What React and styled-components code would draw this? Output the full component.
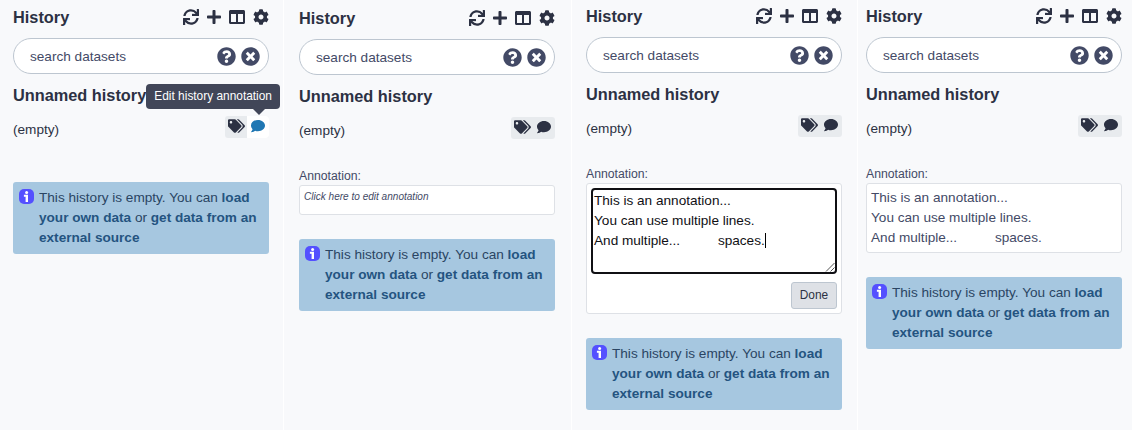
import React from "react";
import styled, { createGlobalStyle } from "styled-components";
import {
  FaSync,
  FaPlus,
  FaColumns,
  FaCog,
  FaQuestionCircle,
  FaTimesCircle,
  FaTags,
  FaComment,
} from "react-icons/fa";

const GlobalStyle = createGlobalStyle`
  *, *::before, *::after { box-sizing: border-box; }
  body {
    margin: 0;
    background: #f8f9fb;
    color: #2c3143;
    font-family: "Liberation Sans", Arial, sans-serif;
    font-size: 13.6px;
    line-height: 20px;
    overflow: hidden;
  }
`;

const Page = styled.main`
  display: grid;
  grid-template-columns: 284px 288px 286px 274px;
  height: 430px;
`;

const Panel = styled.section`
  display: flex;
  flex-direction: column;
  padding-top: ${(p) => p.$top}px;
  padding-left: ${(p) => p.$left}px;
  border-right: ${(p) => (p.$last ? "0" : "1px solid #fff")};
  > * { width: 256px; flex: none; }
`;

const Header = styled.header`
  display: flex;
  justify-content: space-between;
  align-items: center;
  height: 20px;
`;

const Title = styled.h1`
  margin: 0;
  font-size: 16.32px;
  line-height: 20px;
  font-weight: bold;
`;

const Toolbar = styled.nav`
  display: flex;
  gap: 8px;
  svg { display: block; width: 16px; height: 16px; }
  svg:nth-child(2) { width: 14px; }
`;

const SearchBox = styled.div`
  display: flex;
  align-items: center;
  height: 36px;
  margin-top: 11px;
  padding: 0 8px 0 16px;
  border: 1px solid #bdc6d0;
  border-radius: 18px;
  background: #fff;
  color: #434a66;
  svg { display: block; width: 19px; height: 19px; margin-left: 5px; }
`;

const SearchText = styled.span`
  flex: 1;
  padding-top: 1px;
`;

const HistoryName = styled.h2`
  margin: 11px 0 0;
  font-size: 16.32px;
  line-height: 20px;
  font-weight: bold;
`;

const SizeRow = styled.div`
  position: relative;
  display: flex;
  justify-content: space-between;
  height: 22px;
  margin-top: 11px;
`;

const SizeText = styled.span`
  padding-top: 4px;
`;

const ButtonGroup = styled.div`
  display: flex;
  border-radius: 3px;
  overflow: hidden;
  background: #e8ebee;
`;

const IconButton = styled.span`
  display: flex;
  justify-content: center;
  width: 22px;
  height: 22px;
  padding-top: 3px;
  background: ${(p) => (p.$active ? "#fff" : "transparent")};
  color: ${(p) => (p.$active ? "#2077b3" : "inherit")};
  svg { display: block; width: ${(p) => p.$size}px; height: 14px; flex: none; }
`;

const Tooltip = styled.div`
  position: absolute;
  right: -11px;
  bottom: 29px;
  padding: 2px 8px 3px;
  border-radius: 4px;
  background: #414658;
  color: #fff;
  font-size: 11.9px;
  white-space: nowrap;
  &::after {
    content: "";
    position: absolute;
    top: 100%;
    right: 15px;
    border: 6.5px solid transparent;
    border-top: 6px solid #414658;
    border-bottom: 0;
  }
`;

const Label = styled.div`
  margin-top: 28px;
  height: 18px;
  line-height: 18px;
  font-size: 12.24px;
  color: #434a66;
`;

const AnnotationBox = styled.div`
  height: ${(p) => p.$height}px;
  padding: 4px;
  border: 1px solid #dee1e6;
  border-radius: 3px;
  background: #fff;
  color: #434a66;
  white-space: pre;
`;

const Placeholder = styled.em`
  display: block;
  font-size: 10.05px;
  line-height: 13px;
`;

const Editor = styled.div`
  position: relative;
  height: 86px;
  padding: 1px;
  border: 2px solid #101014;
  border-radius: 4px;
  color: #101014;
`;

const Caret = styled.span`
  display: inline-block;
  width: 1px;
  height: 15px;
  background: #000;
  vertical-align: -3px;
`;

const ResizeGrip = styled.svg`
  position: absolute;
  right: 0;
  bottom: 0;
`;

const DoneButton = styled.button`
  display: block;
  width: 46px;
  height: 27px;
  margin: 8px 0 0 auto;
  padding: 0 0 2px;
  border: 1px solid #bdc6d0;
  border-radius: 3px;
  background: #dee1e6;
  color: #2c3143;
  font: 11.9px "Liberation Sans", Arial, sans-serif;
`;

const Alert = styled.div`
  display: flex;
  height: 72px;
  margin-top: ${(p) => p.$gap}px;
  padding: 6px;
  border-radius: 3px;
  background: #a6c7e0;
  color: #2a4563;
  p { margin: 0; white-space: nowrap; }
  b { color: #245480; }
`;

const InfoIcon = styled.svg`
  flex: none;
  width: 15px;
  height: 15px;
  margin: 1px 5px 0 0;
`;

const NOTE = "This is an annotation...\nYou can use multiple lines.\nAnd multiple...          spaces.";

function EmptyAlert({ gap }) {
  return (
    <Alert $gap={gap}>
      <InfoIcon viewBox="0 0 15 15">
        <rect width="15" height="15" rx="5" fill="#5450ff" />
        <circle cx="7.6" cy="3.5" r="1.5" fill="#fff" />
        <path d="M4.9 5.7h4.1v7.2H6.6V7.7H4.9z" fill="#fff" />
      </InfoIcon>
      <p>
        This history is empty. You can <b>load</b>
        <br />
        <b>your own data</b> or <b>get data from an</b>
        <br />
        <b>external source</b>
      </p>
    </Alert>
  );
}

function HistoryPanel({ top, left, last, tooltip, gap = 24, children }) {
  return (
    <Panel $top={top} $left={left} $last={last}>
      <Header>
        <Title>History</Title>
        <Toolbar>
          <FaSync />
          <FaPlus />
          <FaColumns />
          <FaCog />
        </Toolbar>
      </Header>
      <SearchBox>
        <SearchText>search datasets</SearchText>
        <FaQuestionCircle />
        <FaTimesCircle />
      </SearchBox>
      <HistoryName>Unnamed history</HistoryName>
      <SizeRow>
        <SizeText>(empty)</SizeText>
        <ButtonGroup>
          <IconButton $size={17}><FaTags /></IconButton>
          <IconButton $size={14} $active={tooltip}><FaComment /></IconButton>
        </ButtonGroup>
        {tooltip && <Tooltip>Edit history annotation</Tooltip>}
      </SizeRow>
      {children}
      <EmptyAlert gap={gap} />
    </Panel>
  );
}

export default function App() {
  return (
    <>
      <GlobalStyle />
      <Page>
        <HistoryPanel top={7} left={13} tooltip gap={44} />
        <HistoryPanel top={8} left={15}>
          <Label>Annotation:</Label>
          <AnnotationBox $height={30}>
            <Placeholder>Click here to edit annotation</Placeholder>
          </AnnotationBox>
        </HistoryPanel>
        <HistoryPanel top={6} left={14}>
          <Label>Annotation:</Label>
          <AnnotationBox $height={131}>
            <Editor>
              {NOTE}
              <Caret />
              <ResizeGrip width="10" height="10" viewBox="0 0 10 10" stroke="#555" strokeWidth="1">
                <path d="M1 9.5 9.5 1M5.5 9.5l4-4" />
              </ResizeGrip>
            </Editor>
            <DoneButton>Done</DoneButton>
          </AnnotationBox>
        </HistoryPanel>
        <HistoryPanel top={6} left={8} last>
          <Label>Annotation:</Label>
          <AnnotationBox $height={70}>{NOTE}</AnnotationBox>
        </HistoryPanel>
      </Page>
    </>
  );
}
